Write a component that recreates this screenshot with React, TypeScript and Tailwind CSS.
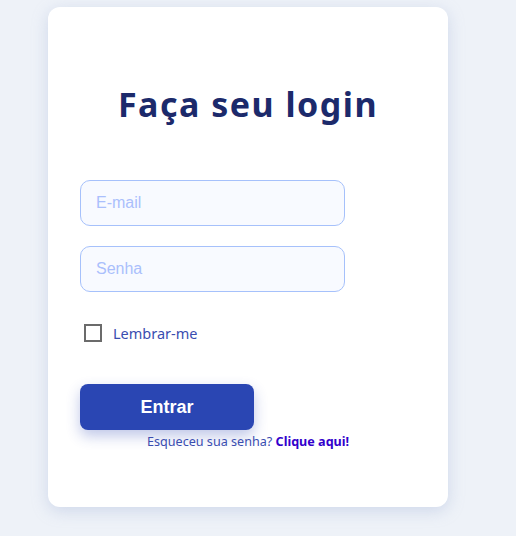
import React from "react";

export default function App() {
  return (
    <div className="min-h-[536px] w-full bg-[#eef2f8] pt-[7px]" style={{ fontFamily: '"Noto Sans", sans-serif' }}>
      <div className="ml-[48px] flex h-[500px] w-[400px] flex-col rounded-[12px] bg-white px-[32px] shadow-[0_4px_16px_rgba(150,165,210,0.35)]">
        <h1 className="mt-[75px] text-center text-[34px] font-bold leading-[44px] tracking-[1.5px] text-[#1c2a6b]">
          Faça seu login
        </h1>
        <input
          placeholder="E-mail"
          className="mt-[54px] h-[46px] w-[265px] rounded-[10px] border border-[#a6c1fb] bg-[#f8faff] px-[15px] text-[16px] outline-none placeholder:text-[#aabffc]"
          style={{ fontFamily: '"Liberation Sans", Arial, sans-serif' }}
        />
        <input
          placeholder="Senha"
          type="password"
          className="mt-[20px] h-[46px] w-[265px] rounded-[10px] border border-[#a6c1fb] bg-[#f8faff] px-[15px] text-[16px] outline-none placeholder:text-[#aabffc]"
          style={{ fontFamily: '"Liberation Sans", Arial, sans-serif' }}
        />
        <label className="ml-[4px] mt-[32px] flex items-center gap-[11px]">
          <span className="h-[18px] w-[18px] border-2 border-[#6b6b6b] bg-white" />
          <span className="text-[14.5px] leading-[18px] text-[#3a4db0]">Lembrar-me</span>
        </label>
        <button
          className="mt-[42px] h-[46px] w-[174px] rounded-[8px] bg-[#2a46b3] text-[18px] font-bold text-white shadow-[0_6px_14px_rgba(42,70,179,0.3)]"
          style={{ fontFamily: '"Liberation Sans", Arial, sans-serif' }}
        >
          Entrar
        </button>
        <p className="ml-[67px] mt-[3px] text-[12.6px] leading-[18px] text-[#3a4db0]">
          Esqueceu sua senha? <a className="font-bold text-[#3300cc]">Clique aqui!</a>
        </p>
      </div>
    </div>
  );
}
